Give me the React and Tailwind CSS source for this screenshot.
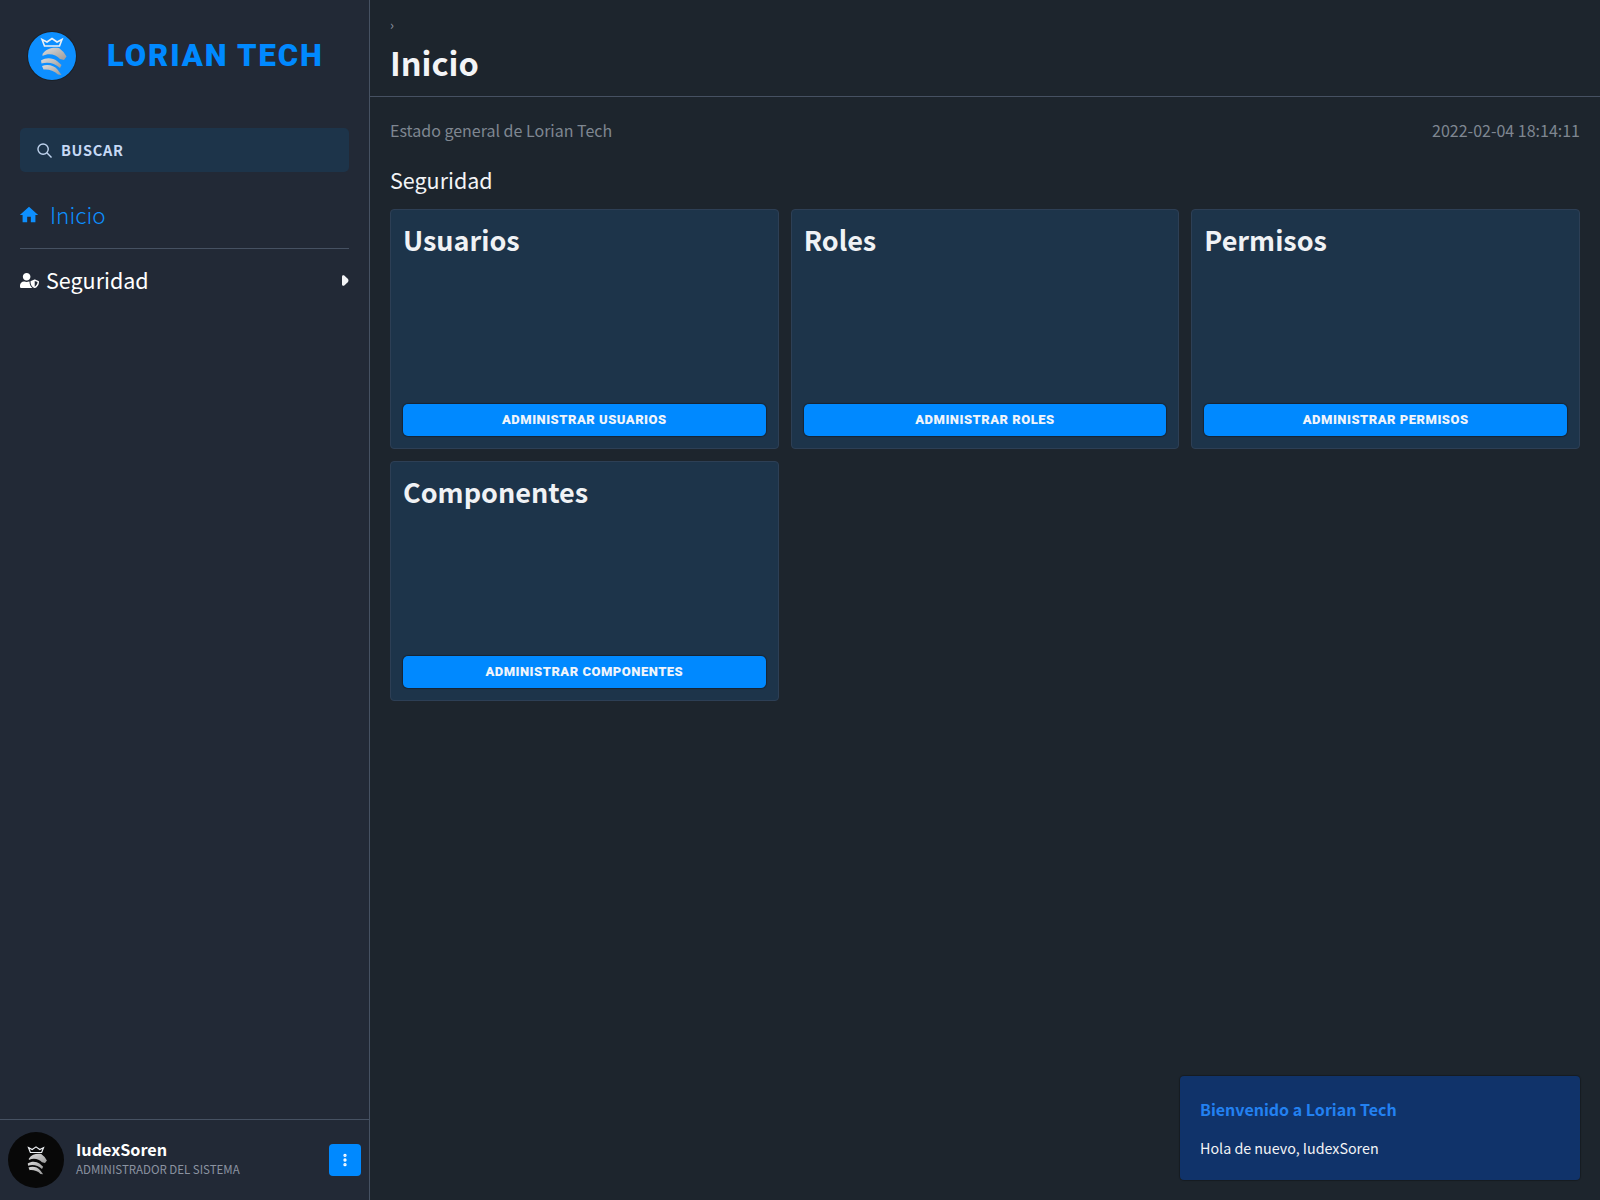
import React from 'react';
import { MoreVertical } from 'lucide-react';
import { FaUserShield } from 'react-icons/fa';
import { MdHome } from 'react-icons/md';

const sans = 'font-["Noto_Sans_CJK_JP",sans-serif]';

const LionMark = ({ className, id }) => (
  <svg viewBox="0 0 48 48" className={className}>
    <defs>
      <linearGradient id={id} x1="0" y1="0" x2="1" y2="1">
        <stop offset="0" stopColor="#dcdcdc" />
        <stop offset="1" stopColor="#9a9a9a" />
      </linearGradient>
    </defs>
    <path d="M14 7.500l5 2.500 5-3.500 5 3.500 5-2.500-2.500 6.500H16.500z" fill="none" stroke="#eef1f4" strokeWidth="1.600" />
    <path d="M14.500 22c4-6 11-7 16.500-6l4.500 4 3 4.500-2.500 3.500-4-1c-4-4-10.500-6.500-17.500-3z" fill={`url(#${id})`} />
    <path d="M13 28.500c5.500-3.500 12-2.500 16 .5l4.500 4-1.500 3c-5.500-5-12-6.500-18.500-4.500z" fill={`url(#${id})`} />
    <path d="M14 34c6-2 12-.5 15.500 3.500l4 5.500-3.500-.5c-4-4-9.500-5.500-14.500-5z" fill={`url(#${id})`} />
  </svg>
);

const cards = [
  { title: 'Usuarios', action: 'ADMINISTRAR USUARIOS' },
  { title: 'Roles', action: 'ADMINISTRAR ROLES' },
  { title: 'Permisos', action: 'ADMINISTRAR PERMISOS' },
  { title: 'Componentes', action: 'ADMINISTRAR COMPONENTES' },
];

const Sidebar = () => (
  <aside className="w-[370px] shrink-0 h-full bg-[#222936] border-r border-[#465162] flex flex-col">
    <div className="h-[112px] pl-[28px] flex items-center">
      <div className="w-[48px] h-[48px] rounded-full bg-[#0d8fff] ring-1 ring-[#1b2028]">
        <LionMark id="logo" className="w-[48px] h-[48px]" />
      </div>
      <span className='ml-[31px] -mt-[1px] font-["Roboto",sans-serif] font-black text-[31px] leading-none tracking-[1.9px] text-[#0089ff]'>
        LORIAN TECH
      </span>
    </div>
    <div className="px-[20px]">
      <div className="mt-[16px] h-[44px] rounded-[5px] bg-[#1d344a] flex items-center pl-[17px] gap-[9px]">
        <svg viewBox="0 0 16 16" className="w-[15px] h-[15px]" fill="none" stroke="#bfd3ee" strokeWidth="1.500">
          <circle cx="6.500" cy="6.500" r="5.500" />
          <path d="M10.500 10.500l5 5" />
        </svg>
        <span className="text-[14.500px] font-bold tracking-[0.7px] text-[#c6d9f5]">BUSCAR</span>
      </div>
      <div className="mt-[21px] h-[44px] flex items-center gap-[10px] text-[#0d8fff]">
        <MdHome className="-ml-[2px] w-[22px] h-[22px]" />
        <span className="text-[22.500px] font-light">Inicio</span>
      </div>
      <div className="mt-[11px] border-t border-[#465162]" />
      <div className="mt-[9px] h-[44px] flex items-center gap-[7px] text-white">
        <FaUserShield className="w-[19px] h-[19px]" />
        <span className="text-[21.500px]">Seguridad</span>
        <svg viewBox="0 0 7 11" className="ml-auto w-[7px] h-[11px]" fill="#f3f4f6">
          <path d="M0 1.500C0 .5 1 0 2 .3l3.500 3.200c1.300 1.300 1.300 2.700 0 4L2 10.700c-1 .3-2-.2-2-1.200z" />
        </svg>
      </div>
    </div>
    <div className="mt-auto h-[81px] border-t border-[#465162] flex items-center pl-[8px] pr-[8px]">
      <div className="w-[56px] h-[56px] rounded-full bg-[#080808] flex items-center justify-center">
        <LionMark id="avatar" className="w-[36px] h-[36px]" />
      </div>
      <div className="ml-[12px] -mt-[3px] flex flex-col">
        <span className="text-[16.200px] leading-[21px] font-bold text-white">IudexSoren</span>
        <span className="text-[11.500px] leading-[18px] text-[#8b93a1]">ADMINISTRADOR DEL SISTEMA</span>
      </div>
      <button className="ml-auto w-[32px] h-[32px] rounded-[4px] bg-[#0089ff] flex items-center justify-center">
        <MoreVertical className="w-[16px] h-[16px] text-white" strokeWidth={3} />
      </button>
    </div>
  </aside>
);

const Card = ({ title, action }) => (
  <div className="h-[240px] rounded-[4px] bg-[#1d344a] border border-[#2d3f55] flex flex-col px-[12px] pb-[12px]">
    <h3 className="mt-[10px] text-[27px] leading-[40px] font-bold text-[#f0f2f5]">{title}</h3>
    <button className='mt-auto h-[32px] rounded-[5px] shadow-[0_0_1px_1px_rgba(0,0,0,0.3)] bg-[#0089ff] text-[13px] font-["Roboto",sans-serif] font-black tracking-[0.5px] text-[#f0f4fa]'>
      {action}
    </button>
  </div>
);

export default function App() {
  return (
    <div className={`relative h-[1200px] w-full flex overflow-hidden bg-[#1d252d] ${sans}`}>
      <Sidebar />
      <main className="flex-1 min-w-0">
        <header className="h-[97px] border-b border-[#465162] px-[20px]">
          <div className="pt-[16px] text-[13px] leading-[18px] text-[#8b93a1]">›</div>
          <h1 className="mt-[6px] text-[32.500px] leading-[44px] font-bold text-[#f3f4f6]">Inicio</h1>
        </header>
        <div className="px-[20px]">
          <div className="mt-[21px] flex justify-between items-center text-[16px] leading-[24px] text-[#7f8791]">
            <span>Estado general de Lorian Tech</span>
            <span>2022-02-04 18:14:11</span>
          </div>
          <h2 className="mt-[23px] text-[21.500px] leading-[30px] text-[#f3f4f6]">Seguridad</h2>
          <div className="mt-[14px] grid grid-cols-3 gap-[12px]">
            {cards.map((c) => (
              <Card key={c.title} title={c.title} action={c.action} />
            ))}
          </div>
        </div>
      </main>
      <div className="absolute right-[20px] bottom-[20px] w-[400px] h-[104px] rounded-[4px] shadow-[0_0_1px_1px_rgba(0,0,0,0.25)] bg-[#10336a] px-[20px] pt-[20px]">
        <div className="text-[16px] leading-[26px] font-bold text-[#2381f1]">Bienvenido a Lorian Tech</div>
        <div className="mt-[14px] text-[14.300px] leading-[24px] text-[#f3f4f6]">Hola de nuevo, IudexSoren</div>
      </div>
    </div>
  );
}
